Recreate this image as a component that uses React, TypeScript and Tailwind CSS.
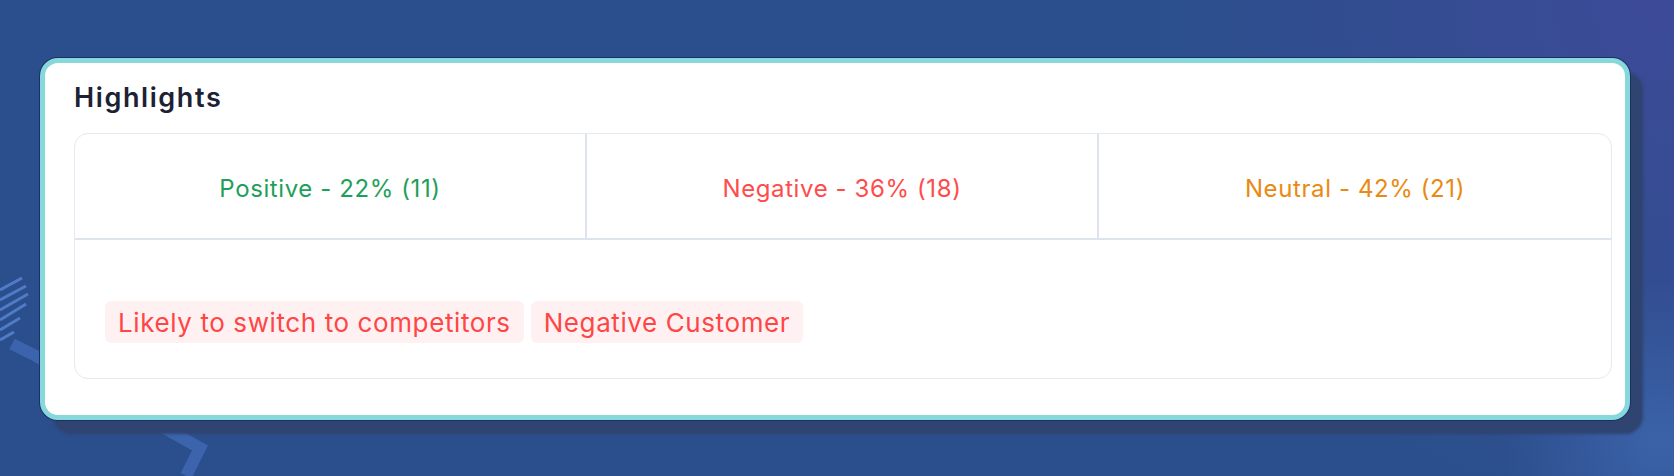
const stats = [
  { label: "Positive - 22% (11)", color: "text-[#1ea05a]" },
  { label: "Negative - 36% (18)", color: "text-[#ff4b4b]" },
  { label: "Neutral - 42% (21)", color: "text-[#e98a12]" },
];

const tags = ["Likely to switch to competitors", "Negative Customer"];

function Backdrop() {
  return (
    <svg
      className="absolute inset-0 w-full h-full pointer-events-none"
      viewBox="0 0 1674 476"
      preserveAspectRatio="none"
    >
      <defs>
        <radialGradient id="glow" cx="1674" cy="0" r="520" gradientUnits="userSpaceOnUse">
          <stop offset="0" stopColor="#3d4a98" />
          <stop offset="1" stopColor="#3d4a98" stopOpacity="0" />
        </radialGradient>
        <radialGradient id="glow2" cx="1660" cy="440" r="160" gradientUnits="userSpaceOnUse">
          <stop offset="0" stopColor="#3b62a8" />
          <stop offset="1" stopColor="#3b62a8" stopOpacity="0" />
        </radialGradient>
      </defs>
      <rect width="1674" height="476" fill="url(#glow)" />
      <rect width="1674" height="476" fill="url(#glow2)" />
      <g stroke="#5a86d6" strokeWidth="3" opacity="0.8">
        <line x1="0" y1="290" x2="22" y2="278" />
        <line x1="0" y1="300" x2="26" y2="286" />
        <line x1="0" y1="310" x2="28" y2="294" />
        <line x1="0" y1="320" x2="26" y2="304" />
        <line x1="0" y1="330" x2="20" y2="318" />
        <line x1="0" y1="340" x2="14" y2="332" />
      </g>
      <path
        d="M12 344 L36 356 L200 448 L186 476"
        fill="none"
        stroke="#3c64ad"
        strokeWidth="12"
      />
    </svg>
  );
}

export default function App() {
  return (
    <div className="relative w-full h-[476px] overflow-hidden bg-[#2b4f8c] font-['Inter',sans-serif]">
      <Backdrop />
      <div className="relative pt-[58px] pl-[40px]">
        <div className="w-[1590px] h-[362px] rounded-[18px] border-[5px] border-[#86d8db] bg-white shadow-[0_0_0_1px_#1d2d6c,13px_14px_3px_0_#2f4470] pl-[29px] pr-[13px] pt-[18px] pb-[36px] flex flex-col">
          <h2 className="text-[27px] leading-[34px] font-semibold text-[#1c2233] tracking-[1.6px]">
            Highlights
          </h2>
          <div className="mt-[18px] flex-1 rounded-[14px] border border-[#e6e9f1] flex flex-col overflow-hidden">
            <div className="grid grid-cols-3 h-[106px] border-b-2 border-[#dde4f0]">
              {stats.map((s, i) => (
                <div
                  key={s.label}
                  className={`flex items-center justify-center pt-[5px] text-[24px] tracking-[0.6px] ${s.color} ${
                    i < 2 ? "border-r-2 border-[#dde4f0]" : ""
                  }`}
                >
                  {s.label}
                </div>
              ))}
            </div>
            <div className="flex-1 flex items-end gap-[7px] px-[30px] pb-[35px]">
              {tags.map((t) => (
                <span
                  key={t}
                  className="h-[42px] flex items-center px-[13px] rounded-[6px] bg-[#fff1f1] text-[#ff4646] text-[26px] tracking-[0.6px]"
                >
                  {t}
                </span>
              ))}
            </div>
          </div>
        </div>
      </div>
    </div>
  );
}
